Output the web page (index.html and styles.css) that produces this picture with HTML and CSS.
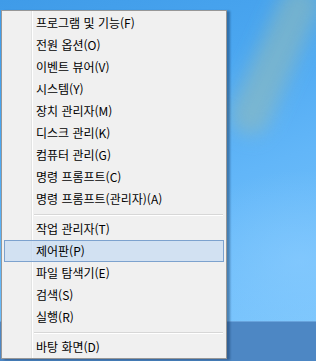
FILE: index.html
```html
<!DOCTYPE html>
<html lang="ko">
<head>
<meta charset="utf-8">
<link rel="stylesheet" href="styles.css">
</head>
<body>
<div class="screen">
  <div class="desktop">
    <div class="streak"></div>
  </div>
  <div class="taskbar"></div>
  <div class="menu">
    <div class="item">프로그램 및 기능(F)</div>
    <div class="item">전원 옵션(O)</div>
    <div class="item">이벤트 뷰어(V)</div>
    <div class="item">시스템(Y)</div>
    <div class="item">장치 관리자(M)</div>
    <div class="item">디스크 관리(K)</div>
    <div class="item">컴퓨터 관리(G)</div>
    <div class="item">명령 프롬프트(C)</div>
    <div class="item">명령 프롬프트(관리자)(A)</div>
    <div class="sep"></div>
    <div class="item">작업 관리자(T)</div>
    <div class="item hover">제어판(P)</div>
    <div class="item">파일 탐색기(E)</div>
    <div class="item">검색(S)</div>
    <div class="item">실행(R)</div>
    <div class="sep"></div>
    <div class="item">바탕 화면(D)</div>
  </div>
</div>
</body>
</html>
```

FILE: styles.css
```css
html, body {
  margin: 0;
  padding: 0;
}
body {
  width: 316px;
  height: 361px;
  overflow: hidden;
  font-family: "Noto Sans CJK KR", "Noto Sans", sans-serif;
}
.screen {
  position: relative;
  width: 316px;
  height: 361px;
  display: flex;
  flex-direction: column;
  overflow: hidden;
}
.desktop {
  position: relative;
  flex: 1;
  overflow: hidden;
  background:
    radial-gradient(ellipse 120px 90px at 300px 260px, rgba(140, 205, 255, 0.55), rgba(140, 205, 255, 0) 100%),
    linear-gradient(160deg, #3f9be8 0%, #4aa6f0 30%, #62b6f8 60%, #7cc6fd 100%);
}
.streak {
  position: absolute;
  left: 255px;
  top: -20px;
  width: 40px;
  height: 160px;
  transform: rotate(24deg);
  background: rgba(150, 188, 180, 0.55);
  filter: blur(9px);
  border-radius: 20px;
}
.taskbar {
  height: 39px;
  background: #4d87c4;
  border-top: 1px solid #68a3dc;
}
.menu {
  position: absolute;
  left: 1px;
  top: 10px;
  width: 226px;
  box-sizing: border-box;
  background-color: #f0f0f0;
  background-image: linear-gradient(to right, transparent 29px, #e2e3e3 29px, #e2e3e3 30px, #ffffff 30px, #ffffff 31px, transparent 31px);
  border: 1px solid #979797;
  padding: 1px 2px 0 2px;
  box-shadow: 3px 1px 2px rgba(20, 50, 90, 0.45);
  font-size: 12px;
  color: #000;
}
.item {
  height: 22px;
  box-sizing: border-box;
  border: 1px solid transparent;
  padding-left: 31px;
  line-height: 20px;
  white-space: nowrap;
}
.item.hover {
  background: rgba(197, 218, 242, 0.7);
  border-color: #7da2ce;
}
.sep {
  height: 8px;
  box-sizing: border-box;
  padding-top: 4px;
  margin: 0 1px 0 30px;
}
.sep::after {
  content: "";
  display: block;
  height: 1px;
  background: #d7d7d7;
  box-shadow: 0 1px 0 #ffffff;
}
```
